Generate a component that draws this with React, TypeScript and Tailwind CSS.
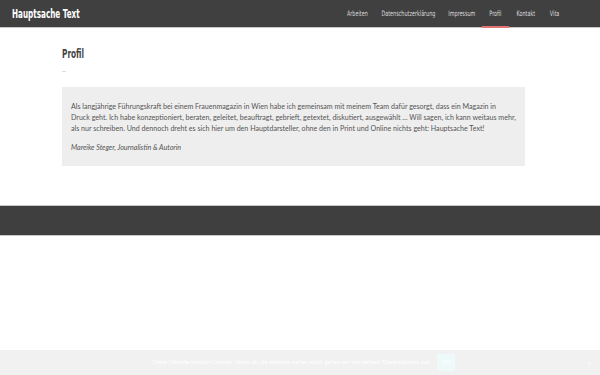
import React from "react";

const cond = { fontFamily: '"DejaVu Sans Condensed", "DejaVu Sans", sans-serif', fontStretch: "condensed" as const };
const body = { fontFamily: 'Lato, "Open Sans", sans-serif' };

const nav: [string, string][] = [
  ["Arbeiten", "w-[21px]"],
  ["Datenschutzerklärung", "w-[52px]"],
  ["Impressum", "w-[27px]"],
  ["Profil", "w-[13px]"],
  ["Kontakt", "w-[20px]"],
  ["Vita", "w-[10px]"],
];

export default function App() {
  return (
    <div className="w-[600px] h-[375px] bg-white relative overflow-hidden" style={body}>
      <header className="h-[28px] bg-[#404040] border-b border-[#c8c8c8] flex items-stretch justify-between">
        <div className="pl-[12px] flex items-center w-[90px]">
          <span className="inline-block whitespace-nowrap origin-left scale-x-[0.67] text-white text-[12px] font-bold" style={cond}>
            Hauptsache Text
          </span>
        </div>
        <nav className="flex items-stretch pr-[33px]">
          {nav.map(([n, w]) => (
            <div key={n} className="relative flex items-center px-[7px]">
              <div className={"flex justify-center " + w}>
                <span className="inline-block whitespace-nowrap scale-x-[0.72] text-[7.5px] text-[#dcdcdc]" style={cond}>
                  {n}
                </span>
              </div>
              {n === "Profil" && (
                <span className="absolute left-0 right-0 bottom-[-1px] h-[2px] bg-[#e27474]" />
              )}
            </div>
          ))}
        </nav>
      </header>

      <main className="px-[62px] pt-[19px]">
        <h1 className="w-[40px] text-[12px] text-[#444] font-bold leading-[14px]">
          <span className="inline-block origin-left scale-x-[0.68]" style={cond}>Profil</span>
        </h1>
        <div className="w-[4px] h-px bg-[#ddd] mt-[10px]" />
        <div className="mt-[15px] w-[463px] h-[79px] bg-[#eeeeee] pl-[9px] pr-[4px] pt-[14px] text-[7.1px] leading-[11px] text-[#555]">
          <p className="whitespace-nowrap">
            Als langjährige Führungskraft bei einem Frauenmagazin in Wien habe ich gemeinsam mit meinem Team dafür gesorgt, dass ein Magazin in
            <br />
            Druck geht. Ich habe konzeptioniert, beraten, geleitet, beauftragt, gebrieft, getextet, diskutiert, ausgewählt … Will sagen, ich kann weitaus mehr,
            <br />
            als nur schreiben. Und dennoch dreht es sich hier um den Hauptdarsteller, ohne den in Print und Online nichts geht: Hauptsache Text!
          </p>
          <p className="italic mt-[8px]">Mareike Steger, Journalistin &amp; Autorin</p>
        </div>
      </main>

      <footer className="mt-[39px] h-[31px] bg-[#3f3f3f] border-y border-[#c8c8c8]" />

      <div className="absolute left-0 right-0 bottom-0 h-[25px] bg-[#f1f1f1] flex items-center justify-center text-[5.8px] text-white">
        <span className="ml-[8px]">Diese Website benutzt Cookies. Wenn du die Website weiter nutzt, gehen wir von deinem Einverständnis aus.</span>
        <span className="ml-[6px] px-[5px] py-[4px] bg-[#eefafa] text-white">OK</span>
        <span className="absolute right-[8px] text-[8px]">×</span>
      </div>
    </div>
  );
}
